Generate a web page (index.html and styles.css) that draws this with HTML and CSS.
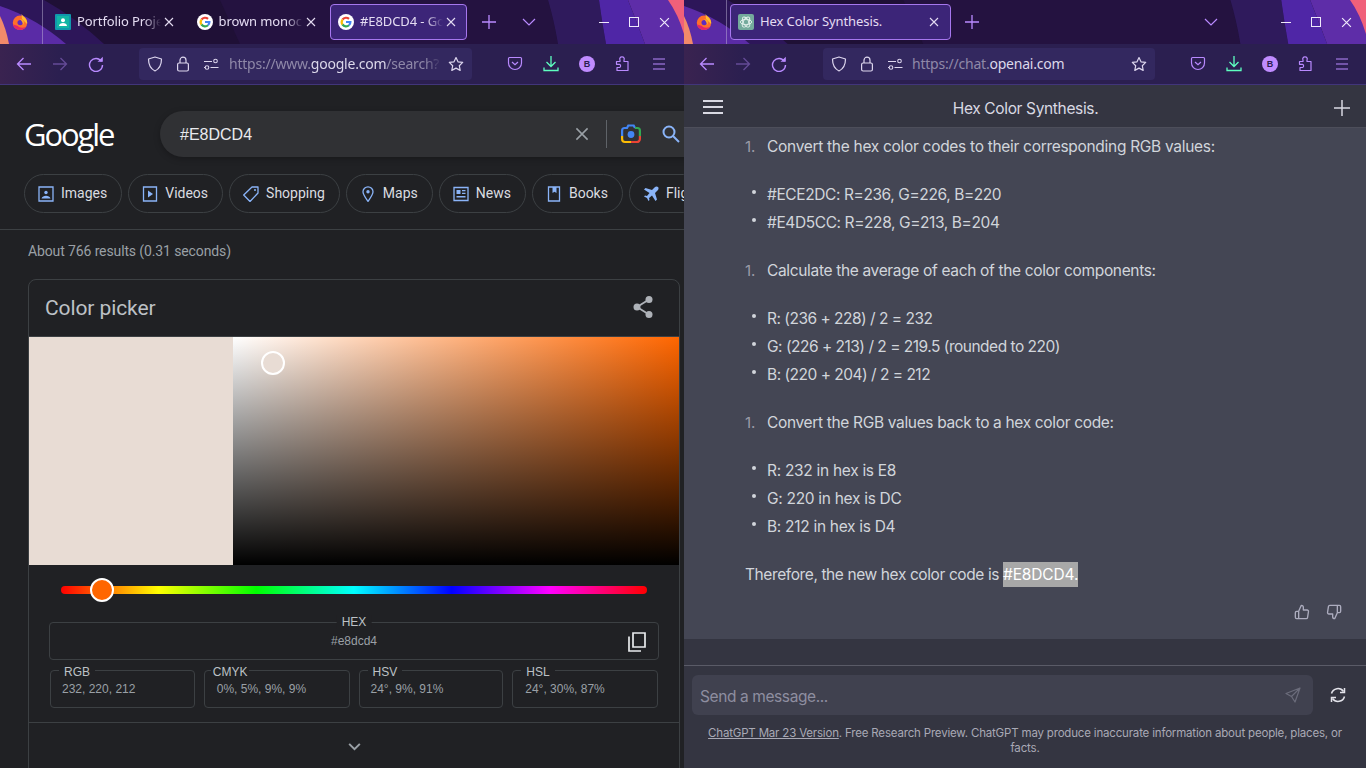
FILE: index.html
```html
<!DOCTYPE html>
<html lang="en">
<head>
<meta charset="utf-8">
<title>Split browsers</title>
<link rel="stylesheet" href="styles.css">
</head>
<body>
<svg class="sprite" width="0" height="0" aria-hidden="true">
  <defs>
    <symbol id="theme" viewBox="0 0 684 44" preserveAspectRatio="none">
      <rect width="684" height="44" fill="#1f1036"/>
      <path d="M220 0H548Q554 20 558 44H240Z" fill="#241240"/>
      <path d="M0 0H44Q76 18 104 44H0Z" fill="#2d1659"/>
      <path d="M0 6Q36 18 66 44H0Z" fill="#5a2ba6"/>
      <path d="M0 16Q6 28 9 44H0Z" fill="#f28a6a"/>
      <path d="M548 0H599Q602 22 606 44H558Q554 20 548 0Z" fill="#2f1a5c"/>
      <path d="M599 0H628Q636 20 645 44H606Q602 22 599 0Z" fill="#4f26a6"/>
      <path d="M628 0H684V44H645Q636 20 628 0Z" fill="#5e2da8"/>
      <path d="M668 0H684V34Q678 14 668 0Z" fill="#f0607a"/>
    </symbol>
    <symbol id="firefox" viewBox="0 0 16 16">
      <circle cx="8" cy="8.800" r="7.200" fill="#ff6f2a"/>
      <path d="M9.500 0c.7 2 3.500 3 4.800 5.500.8 1.500 1 3 .8 4.500L10 5z" fill="#ffbd2e"/>
      <path d="M1 10.500C1.800 13.700 4.600 16 8 16c2.500 0 4.700-1.300 6-3.200-2.700 1.500-6.500 1.300-8.500-1z" fill="#e3246b"/>
      <circle cx="8.200" cy="8.600" r="2.700" fill="#5f2bbf"/>
      <path d="M8 5.200c2.400-.4 4 1.200 4 3.400 0 1-.5 2-1.200 2.600.4-1.800-.5-3.800-2.800-6z" fill="#ffa52b"/>
    </symbol>
    <symbol id="classroom" viewBox="0 0 16 16">
      <rect width="16" height="16" rx="1" fill="#1098ad"/>
      <rect x="2" y="2" width="12" height="12" fill="#12b5a5"/>
      <circle cx="8" cy="6.300" r="2" fill="#fff"/>
      <path d="M4 12c0-2 2-3 4-3s4 1 4 3z" fill="#fff"/>
    </symbol>
    <symbol id="g" viewBox="0 0 16 16">
      <circle cx="8" cy="8" r="8" fill="#fff"/>
      <g fill="none" stroke-width="2.200">
        <path d="M4.500 5.500A4.400 4.400 0 0 1 11 4.900" stroke="#ea4335"/>
        <path d="M4.500 10.500a4.400 4.400 0 0 1 0-5" stroke="#fbbc05"/>
        <path d="M11 11.200A4.400 4.400 0 0 1 4.500 10.500" stroke="#34a853"/>
        <path d="M8 8h4.400a4.400 4.400 0 0 1-1.400 3.200" stroke="#4285f4"/>
      </g>
    </symbol>
    <symbol id="gpt" viewBox="0 0 16 16">
      <rect width="16" height="16" rx="2" fill="#74aa9c"/>
      <g fill="none" stroke="#e6f2ee" stroke-width=".9">
        <ellipse cx="8" cy="8" rx="5.600" ry="2.700"/>
        <ellipse cx="8" cy="8" rx="5.600" ry="2.700" transform="rotate(60 8 8)"/>
        <ellipse cx="8" cy="8" rx="5.600" ry="2.700" transform="rotate(120 8 8)"/>
      </g>
    </symbol>
    <symbol id="back" viewBox="0 0 16 16"><path d="M15 8H1.500M7.500 2L1.500 8l6 6" fill="none" stroke="currentColor" stroke-width="1.300"/></symbol>
    <symbol id="fwd" viewBox="0 0 16 16"><path d="M1 8h13.500M8.500 2l6 6-6 6" fill="none" stroke="currentColor" stroke-width="1.300"/></symbol>
    <symbol id="reload" viewBox="0 0 16 16"><path d="M13.500 5.500A6.500 6.500 0 1 0 14.500 9" fill="none" stroke="currentColor" stroke-width="1.400"/><path d="M9.500 5.800h5.300V.7z" fill="currentColor"/></symbol>
    <symbol id="shield" viewBox="0 0 16 16"><path d="M8 1L14.500 3c0 6-1.500 9.500-6.500 12C3 12.500 1.500 9 1.500 3z" fill="none" stroke="currentColor" stroke-width="1.200" stroke-linejoin="round"/></symbol>
    <symbol id="lock" viewBox="0 0 16 16"><rect x="2.600" y="7" width="10.800" height="8" rx="1.500" fill="none" stroke="currentColor" stroke-width="1.200"/><path d="M5 7V4.200a3 3 0 0 1 6 0V7" fill="none" stroke="currentColor" stroke-width="1.200"/></symbol>
    <symbol id="tune" viewBox="0 0 16 16" fill="none" stroke="currentColor" stroke-width="1.100"><path d="M1 5.500h8M1 11.500h1M7.500 11.500h8"/><circle cx="12.500" cy="5" r="1.800"/><circle cx="4" cy="11.500" r="1.800"/></symbol>
    <symbol id="star" viewBox="0 0 16 16"><path d="M8 1.500l2 4.300 4.700.6-3.400 3.300.9 4.700L8 12.100l-4.200 2.300.9-4.700L1.300 6.400 6 5.800z" fill="none" stroke="currentColor" stroke-width="1.200" stroke-linejoin="round"/></symbol>
    <symbol id="pocket" viewBox="0 0 16 16"><path d="M2.500 1.500h11c.6 0 1 .4 1 1v4.500a6.500 6.500 0 0 1-13 0V2.500c0-.6.4-1 1-1z" fill="none" stroke="currentColor" stroke-width="1.200"/><path d="M5 6l3 2.800L11 6" fill="none" stroke="currentColor" stroke-width="1.200"/></symbol>
    <symbol id="download" viewBox="0 0 16 16"><path d="M8 0v10M3.500 6L8 10.500 12.500 6M1 11.500V14.500h14v-3" fill="none" stroke="currentColor" stroke-width="1.300"/></symbol>
    <symbol id="puzzle" viewBox="0 0 16 16"><path d="M1.500 5.500h3.500V4a2 2 0 0 1 2-3 2 2 0 0 1 2 3v1.500h4v9H2v-3h2.500a1.700 1.700 0 0 0 0-3.200H1.500z" fill="none" stroke="currentColor" stroke-width="1.200" stroke-linejoin="round"/></symbol>
    <symbol id="menu" viewBox="0 0 16 16"><path d="M2 3h12M2 8h12M2 13h12" stroke="currentColor" stroke-width="1.200"/></symbol>
    <symbol id="ham" viewBox="0 0 20 16"><path d="M0 2h20M0 8h20M0 14h20" stroke="currentColor" stroke-width="1.800"/></symbol>
    <symbol id="x" viewBox="0 0 10 10"><path d="M1 1l8 8M9 1L1 9" stroke="currentColor" stroke-width="1.100"/></symbol>
    <symbol id="plus" viewBox="0 0 14 14"><path d="M7 0v14M0 7h14" stroke="currentColor" stroke-width="1.300"/></symbol>
    <symbol id="chev" viewBox="0 0 14 8"><path d="M1 1l6 6 6-6" fill="none" stroke="currentColor" stroke-width="1.200"/></symbol>
    <symbol id="chev-bold" viewBox="0 0 14 9"><path d="M1 1l6 6 6-6" fill="none" stroke="currentColor" stroke-width="2.200"/></symbol>
    <symbol id="images" viewBox="0 0 16 16"><path d="M1 1h14v14H1z" fill="none" stroke="currentColor" stroke-width="1.300"/><circle cx="8" cy="6.500" r="1.700" fill="currentColor"/><path d="M3.500 12.500c.5-2 2.500-2.800 4.500-2.800s4 .8 4.500 2.800z" fill="currentColor"/></symbol>
    <symbol id="video" viewBox="0 0 16 16"><path d="M1.500 1h13v14h-13z" fill="none" stroke="currentColor" stroke-width="1.300"/><path d="M6 4.500L11 8l-5 3.500z" fill="currentColor"/></symbol>
    <symbol id="tag" viewBox="0 0 16 16"><path d="M9 1h6v6l-8 8.500L.7 9z" fill="none" stroke="currentColor" stroke-width="1.300" stroke-linejoin="round"/><circle cx="12" cy="4" r="1" fill="currentColor"/></symbol>
    <symbol id="pin" viewBox="0 0 16 16"><path d="M8 15.500C5 11 3 8.500 3 5.800a5 5 0 0 1 10 0C13 8.500 11 11 8 15.500z" fill="none" stroke="currentColor" stroke-width="1.300"/><circle cx="8" cy="5.800" r="1.700" fill="currentColor"/></symbol>
    <symbol id="news" viewBox="0 0 16 16"><path d="M1 1.500h14v13H1z" fill="none" stroke="currentColor" stroke-width="1.300"/><path d="M3.500 4h4v4h-4zM9 4h3.500v1.300H9zM9 6.700h3.500V8H9zM3.500 10h9v1.500h-9z" fill="currentColor"/></symbol>
    <symbol id="book" viewBox="0 0 16 16"><path d="M2.500 1h11v14h-11z" fill="none" stroke="currentColor" stroke-width="1.300"/><path d="M6.500 1h4v6l-2-1.300-2 1.300z" fill="currentColor"/></symbol>
    <symbol id="plane" viewBox="0 0 16 16"><path d="M15 1c-1-1-2.500-.5-3.500.5L9 4 2.500 2 1 3.500 6.500 7 4 10l-2-.5L1 10.500l3 1.500 1.500 3 1-1L6 12l3-2.500L12.500 15l1.500-1.500L12 7l2.500-2.500c1-1 1.500-2.500.5-3.500z" fill="currentColor"/></symbol>
    <symbol id="share" viewBox="0 0 20 22"><g fill="currentColor"><circle cx="16" cy="3.500" r="3.500"/><circle cx="4" cy="11" r="3.500"/><circle cx="16" cy="18.500" r="3.500"/></g><path d="M16 3.500L4 11l12 7.500" fill="none" stroke="currentColor" stroke-width="1.800"/></symbol>
    <symbol id="copy" viewBox="0 0 18 20"><path d="M5 1h12v14H5z" fill="none" stroke="currentColor" stroke-width="1.700"/><path d="M1 4.500V19h12" fill="none" stroke="currentColor" stroke-width="1.700"/></symbol>
    <symbol id="lens" viewBox="0 0 20 20" fill="none" stroke-width="2.200">
      <path d="M1.100 12V6.500A2.500 2.500 0 0 1 3.600 4H6l1.300-2.500h5.400L14 4" stroke="#4285f4"/>
      <path d="M14 4h2.400a2.500 2.500 0 0 1 2.500 2.500V12" stroke="#34a853"/>
      <path d="M18.900 12v3a3 3 0 0 1-3 3H10" stroke="#ea4335"/>
      <path d="M10 18H4a3 3 0 0 1-2.900-3v-3" stroke="#fbbc05"/>
      <circle cx="10" cy="10.500" r="3.400" fill="#4285f4" stroke="none"/>
    </symbol>
    <symbol id="search" viewBox="0 0 18 18"><circle cx="7" cy="7" r="5.500" fill="none" stroke="currentColor" stroke-width="2"/><path d="M11 11l6 6" stroke="currentColor" stroke-width="2"/></symbol>
    <symbol id="up" viewBox="0 0 24 24"><path d="M14 9V5a3 3 0 0 0-3-3l-4 9v11h11.300a2 2 0 0 0 2-1.700l1.400-9A2 2 0 0 0 19.700 9zM7 22H4a2 2 0 0 1-2-2v-7a2 2 0 0 1 2-2h3" fill="none" stroke="currentColor" stroke-width="2" stroke-linejoin="round"/></symbol>
    <symbol id="down" viewBox="0 0 24 24"><path d="M10 15v4a3 3 0 0 0 3 3l4-9V2H5.700a2 2 0 0 0-2 1.700l-1.400 9A2 2 0 0 0 4.300 15zM17 2h3a2 2 0 0 1 2 2v7a2 2 0 0 1-2 2h-3" fill="none" stroke="currentColor" stroke-width="2" stroke-linejoin="round"/></symbol>
    <symbol id="send" viewBox="0 0 16 16"><path d="M15 1L1 6.500 6.500 9.500 10 15zM15 1L6.500 9.500" fill="none" stroke="currentColor" stroke-width="1.200" stroke-linejoin="round"/></symbol>
    <symbol id="regen" viewBox="0 0 16 16" fill="none" stroke="currentColor" stroke-width="1.500"><path d="M1.500 6.500A6.700 6.700 0 0 1 13.500 4.500"/><path d="M14.500 9.500A6.700 6.700 0 0 1 2.500 11.500"/><path d="M14.500 1v4.500H10M1.500 15v-4.500H6"/></symbol>
  </defs>
</svg>

<main class="desktop">
  <section class="window window-left">
    <header class="tabbar">
      <svg class="theme"><use href="#theme"/></svg>
      <div class="ffbtn"><svg class="i16"><use href="#firefox"/></svg></div>
      <div class="tabs">
        <div class="tab"><svg class="i16"><use href="#classroom"/></svg><span class="tab-label fade">Portfolio Proje</span><svg class="i-x"><use href="#x"/></svg></div>
        <div class="tab"><svg class="i16"><use href="#g"/></svg><span class="tab-label fade">brown monoc</span><svg class="i-x"><use href="#x"/></svg></div>
        <div class="tab tab-active"><svg class="i16"><use href="#g"/></svg><span class="tab-label fade">#E8DCD4 - Goo</span><svg class="i-x"><use href="#x"/></svg></div>
      </div>
      <div class="tool"><svg class="i-plus"><use href="#plus"/></svg></div>
      <div class="tool tool-list"><svg class="i-chev"><use href="#chev"/></svg></div>
      <div class="winctl">
        <span class="ctl"><i class="min"></i></span>
        <span class="ctl"><i class="max"></i></span>
        <span class="ctl"><svg class="i-close"><use href="#x"/></svg></span>
      </div>
    </header>
    <nav class="navbar">
      <div class="nb"><svg class="i16"><use href="#back"/></svg></div>
      <div class="nb off"><svg class="i16"><use href="#fwd"/></svg></div>
      <div class="nb"><svg class="i16"><use href="#reload"/></svg></div>
      <div class="urlbar">
        <svg class="i16 ui"><use href="#shield"/></svg>
        <svg class="i16 ui"><use href="#lock"/></svg>
        <svg class="i16 ui"><use href="#tune"/></svg>
        <span class="url fade-url"><span class="dim">https://www.</span>google.com<span class="dim">/search?</span></span>
        <svg class="i16 ui star"><use href="#star"/></svg>
      </div>
      <div class="nb"><svg class="i16"><use href="#pocket"/></svg></div>
      <div class="nb dl"><svg class="i16"><use href="#download"/></svg></div>
      <div class="nb"><span class="avatar">B</span></div>
      <div class="nb"><svg class="i16"><use href="#puzzle"/></svg></div>
      <div class="nb"><svg class="i16"><use href="#menu"/></svg></div>
    </nav>

    <div class="serp">
      <div class="g-head">
        <div class="g-logo">Google</div>
        <div class="g-search">
          <span class="g-query">#E8DCD4</span>
          <svg class="g-x"><use href="#x"/></svg>
          <span class="g-div"></span>
          <svg class="g-lens"><use href="#lens"/></svg>
          <svg class="g-mag"><use href="#search"/></svg>
        </div>
      </div>
      <div class="chips">
        <span class="chip"><svg class="i16"><use href="#images"/></svg>Images</span>
        <span class="chip"><svg class="i16"><use href="#video"/></svg>Videos</span>
        <span class="chip"><svg class="i16"><use href="#tag"/></svg>Shopping</span>
        <span class="chip"><svg class="i16"><use href="#pin"/></svg>Maps</span>
        <span class="chip"><svg class="i16"><use href="#news"/></svg>News</span>
        <span class="chip"><svg class="i16"><use href="#book"/></svg>Books</span>
        <span class="chip"><svg class="i16"><use href="#plane"/></svg>Flig</span>
      </div>
      <div class="stats">About 766 results (0.31 seconds)</div>
      <article class="card">
        <div class="card-head">
          <h2>Color picker</h2>
          <svg class="i-share"><use href="#share"/></svg>
        </div>
        <div class="picker">
          <div class="swatch"></div>
          <div class="field"><span class="field-dot"></span></div>
        </div>
        <div class="hue"><span class="hue-thumb"></span></div>
        <div class="hexbox">
          <span class="flabel flabel-hex">HEX</span>
          <span class="hexval">#e8dcd4</span>
          <svg class="i-copy"><use href="#copy"/></svg>
        </div>
        <div class="codes">
          <div class="code code-rgb"><span class="flabel">RGB</span>232, 220, 212</div>
          <div class="code code-cmyk"><span class="flabel">CMYK</span>0%, 5%, 9%, 9%</div>
          <div class="code code-hsv"><span class="flabel">HSV</span>24°, 9%, 91%</div>
          <div class="code code-hsl"><span class="flabel">HSL</span>24°, 30%, 87%</div>
        </div>
        <div class="expand"><svg class="i-more"><use href="#chev-bold"/></svg></div>
      </article>
    </div>
  </section>

  <section class="window window-right">
    <header class="tabbar">
      <svg class="theme"><use href="#theme"/></svg>
      <div class="ffbtn"><svg class="i16"><use href="#firefox"/></svg></div>
      <div class="tabs">
        <div class="tab tab-active tab-wide"><svg class="i16"><use href="#gpt"/></svg><span class="tab-label">Hex Color Synthesis.</span><svg class="i-x"><use href="#x"/></svg></div>
      </div>
      <div class="tool"><svg class="i-plus"><use href="#plus"/></svg></div>
      <div class="tool tool-list"><svg class="i-chev"><use href="#chev"/></svg></div>
      <div class="winctl">
        <span class="ctl"><i class="min"></i></span>
        <span class="ctl"><i class="max"></i></span>
        <span class="ctl"><svg class="i-close"><use href="#x"/></svg></span>
      </div>
    </header>
    <nav class="navbar">
      <div class="nb"><svg class="i16"><use href="#back"/></svg></div>
      <div class="nb off"><svg class="i16"><use href="#fwd"/></svg></div>
      <div class="nb"><svg class="i16"><use href="#reload"/></svg></div>
      <div class="urlbar">
        <svg class="i16 ui"><use href="#shield"/></svg>
        <svg class="i16 ui"><use href="#lock"/></svg>
        <svg class="i16 ui"><use href="#tune"/></svg>
        <span class="url"><span class="dim">https://chat.</span>openai.com</span>
        <svg class="i16 ui star"><use href="#star"/></svg>
      </div>
      <div class="nb"><svg class="i16"><use href="#pocket"/></svg></div>
      <div class="nb dl"><svg class="i16"><use href="#download"/></svg></div>
      <div class="nb"><span class="avatar">B</span></div>
      <div class="nb"><svg class="i16"><use href="#puzzle"/></svg></div>
      <div class="nb"><svg class="i16"><use href="#menu"/></svg></div>
    </nav>

    <div class="chat">
      <div class="chat-head">
        <svg class="i-ham"><use href="#ham"/></svg>
        <span class="chat-title">Hex Color Synthesis.</span>
        <svg class="i-new"><use href="#plus"/></svg>
      </div>
      <div class="answer">
        <ol class="step step-first"><li>Convert the hex color codes to their corresponding RGB values:</li></ol>
        <ul class="points points-hex">
          <li>#ECE2DC: R=236, G=226, B=220</li>
          <li>#E4D5CC: R=228, G=213, B=204</li>
        </ul>
        <ol class="step"><li>Calculate the average of each of the color components:</li></ol>
        <ul class="points points-calc">
          <li>R: (236 + 228) / 2 = 232</li>
          <li>G: (226 + 213) / 2 = 219.5 (rounded to 220)</li>
          <li>B: (220 + 204) / 2 = 212</li>
        </ul>
        <ol class="step"><li>Convert the RGB values back to a hex color code:</li></ol>
        <ul class="points">
          <li>R: 232 in hex is E8</li>
          <li>G: 220 in hex is DC</li>
          <li>B: 212 in hex is D4</li>
        </ul>
        <p class="result">Therefore, the new hex color code is <mark>#E8DCD4.</mark></p>
        <div class="votes">
          <svg class="i-vote"><use href="#up"/></svg>
          <svg class="i-vote"><use href="#down"/></svg>
        </div>
      </div>
      <div class="chat-gap"></div>
      <div class="composer">
        <div class="inputrow">
          <div class="input"><span>Send a message...</span><svg class="i-send"><use href="#send"/></svg></div>
          <svg class="i-regen"><use href="#regen"/></svg>
        </div>
        <p class="disclaimer"><u>ChatGPT Mar 23 Version</u>. Free Research Preview. ChatGPT may produce inaccurate information about people, places, or facts.</p>
      </div>
    </div>
  </section>
</main>
</body>
</html>
```

FILE: styles.css
```css
* { box-sizing: border-box; }
html, body { margin: 0; height: 768px; overflow: hidden; background: #202124; }
.sprite { display: block; height: 0; }
svg { display: block; flex: none; }
.desktop { display: flex; width: 1366px; height: 768px; }
.window { display: flex; flex-direction: column; height: 768px; overflow: hidden; }
.window-left { width: 684px; }
.window-right { width: 682px; }

/* browser chrome */
.tabbar { position: relative; display: flex; align-items: center; height: 44px; flex: none; padding-right: 5px; font: 13px "Noto Sans", sans-serif; }
.theme { position: absolute; inset: 0; width: 100%; height: 44px; }
.tabbar > * { z-index: 1; }
.tabbar > .theme { z-index: 0; }
.ffbtn { display: flex; align-items: center; justify-content: center; width: 43px; height: 44px; border-right: 1px solid rgba(200, 190, 220, .45); padding-right: 2px; }
.tabs { display: flex; gap: 2.500px; padding-left: 4px; }
.window-right .tabs { padding-left: 3px; margin-right: -1px; }
.tab { display: flex; align-items: center; width: 139px; height: 35px; padding: 0 12px 0 8px; color: #e4dcf2; }
.tab-active { height: 36px; width: 137px; border: 1px solid #a677ee; border-radius: 4px; background: #3c2578; padding: 0 10px 0 7px; }
.tab-wide { width: 221px; padding-right: 11px; }
.tab-label { flex: 1; min-width: 0; margin-left: 6px; padding-bottom: 2px; white-space: nowrap; letter-spacing: -.1px; }
.fade { -webkit-mask-image: linear-gradient(to right, #000 80%, transparent 100%); mask-image: linear-gradient(to right, #000 80%, transparent 100%); }
.i-x { width: 10px; height: 10px; margin-left: 3px; color: #e4dcf2; }
.tool { display: flex; align-items: center; justify-content: center; width: 36px; height: 36px; color: #b98aff; }
.tabs + .tool { margin-left: 4px; }
.tool-list { margin: 0 42px 0 auto; }
.i-plus { width: 14px; height: 14px; }
.i-chev { width: 14px; height: 8px; }
.winctl { display: flex; }
.ctl { display: flex; align-items: center; justify-content: center; width: 30px; height: 30px; color: #efe9fb; }
.min { width: 10px; height: 1px; background: #efe9fb; }
.max { width: 10px; height: 10px; border: 1px solid #efe9fb; }
.i-close { width: 11px; height: 11px; }

.navbar { display: flex; align-items: center; height: 41px; flex: none; padding: 0 7px 1px 6px; background: linear-gradient(to right, #3a2350 0, #2b1f50 60px); border-bottom: 1px solid #41357a; color: #b98aff; }
.window-right .navbar { padding-left: 5px; padding-right: 6px; }
.nb { display: flex; align-items: center; justify-content: center; width: 36px; height: 32px; flex: none; }
.off { opacity: .4; }
.dl { color: #5effc0; }
.urlbar { display: flex; align-items: center; flex: 1; min-width: 0; height: 32px; margin: 0 25px; padding: 0 8px; background: #33285f; border-radius: 4px; }
.window-right .urlbar { margin-left: 26px; }
.ui { margin-right: 12px; color: #ddd6ee; }
.url { flex: 1; min-width: 0; white-space: nowrap; margin-left: -2px; font: 14px "Noto Sans", sans-serif; color: #dcd8ea; letter-spacing: -.22px; }
.window-right .url { margin-left: -3px; }
.dim { color: #8f88a8; }
.fade-url { -webkit-mask-image: linear-gradient(to right, #000 92%, transparent 100%); mask-image: linear-gradient(to right, #000 92%, transparent 100%); }
.star { margin: 0 0 0 6px; }
.i16 { width: 16px; height: 16px; }
.avatar { display: flex; align-items: center; justify-content: center; width: 16px; height: 16px; border-radius: 50%; background: #c08cff; color: #2b1f50; font: bold 9px "Liberation Sans", sans-serif; }

/* Google results */
.serp { flex: 1; min-height: 0; background: #202124; color: #bdc1c6; font-family: Roboto, sans-serif; }
.g-head { display: flex; align-items: center; height: 46px; margin-top: 26px; padding-left: 24px; }
.g-logo { width: 136px; flex: none; font: 500 31px/46px "Open Sans", sans-serif; letter-spacing: -2.100px; color: #fff; }
.g-search { display: flex; align-items: center; flex: none; width: 600px; height: 46px; padding-left: 20px; border-radius: 23px; background: #303134; box-shadow: 0 2px 6px rgba(0, 0, 0, .25); }
.g-query { width: 394px; padding-top: 1px; font: 16px "Liberation Sans", sans-serif; color: #e8eaed; }
.g-x { width: 14px; height: 14px; margin-left: 1px; color: #9aa0a6; }
.g-div { width: 1px; height: 28px; margin: 0 14px 0 17px; background: #5f6368; }
.g-lens { width: 20px; height: 20px; }
.g-mag { width: 18px; height: 18px; margin-left: 21px; color: #8ab4f8; }
.chips { display: flex; gap: 6px; padding: 17px 0 16px 24px; border-bottom: 1px solid #3c4043; overflow: hidden; }
.chip { display: flex; align-items: center; gap: 7px; flex: none; height: 39px; padding: 0 14px 2px 13px; border: 1px solid #3c4043; border-radius: 20px; font: 14px Roboto, sans-serif; color: #dadce0; }
.chip svg { color: #8ab4f8; margin-top: 2px; }
.stats { padding: 12px 0 0 28px; height: 49px; font: 14px/18px Roboto, sans-serif; letter-spacing: -.12px; color: #9aa0a6; }
.card { width: 652px; margin-left: 28px; border: 1px solid #3c4043; border-radius: 8px 8px 0 0; height: 520px; }
.card-head { display: flex; align-items: center; justify-content: space-between; height: 57px; padding: 0 26px 2px 16px; border-bottom: 1px solid #3c4043; }
.card-head h2 { margin: 2px 0 0; font: 400 21px Roboto, sans-serif; letter-spacing: -.1px; color: #bdc1c6; }
.i-share { width: 20px; height: 22px; color: #aeb2b8; }
.picker { display: flex; height: 228px; }
.swatch { width: 204px; background: #e8dcd4; }
.field { position: relative; flex: 1; background: linear-gradient(to top, #000, transparent), linear-gradient(to right, #fff, #ff6600); }
.field-dot { position: absolute; left: 28px; top: 14px; width: 24px; height: 24px; border: 2px solid #fff; border-radius: 50%; background: #e8dcd4; }
.hue { position: relative; height: 8px; margin: 21px 32px 0; border-radius: 4px; background: linear-gradient(to right, #f00 0, #ff0 16.67%, #0f0 33.33%, #0ff 50%, #00f 66.67%, #f0f 83.33%, #f00 100%); }
.hue-thumb { position: absolute; left: 29px; top: -8px; width: 24px; height: 24px; border: 2px solid #fff; border-radius: 50%; background: #ff6600; }
.hexbox { position: relative; display: flex; align-items: center; justify-content: center; height: 38px; margin: 28px 20px 0; border: 1px solid #3c4043; border-radius: 4px; font: 12px "Liberation Sans", sans-serif; }
.hexval { color: #9aa0a6; }
.flabel { position: absolute; top: -7px; left: 8px; padding: 0 5px; background: #202124; font: 12px/14px "Liberation Sans", sans-serif; color: #bdc1c6; }
.flabel-hex { left: 50%; top: -8px; transform: translateX(-50%); }
.i-copy { position: absolute; right: 12px; top: 9px; width: 18px; height: 20px; color: #e8eaed; }
.codes { display: flex; gap: 9px; margin: 10px 21px 0; }
.code { position: relative; flex: 1; height: 38px; padding: 11px 0 0 11px; border: 1px solid #3c4043; border-radius: 4px; font: 12px/14px "Liberation Sans", sans-serif; color: #9aa0a6; }
.code .flabel { top: -6px; }
.code-cmyk { padding-left: 12px; }
.code-hsl { padding-left: 12px; }
.code-cmyk .flabel { left: 6px; padding: 0 2px; }
.i-more { width: 13px; height: 8px; color: #9aa0a6; }
.expand { display: flex; align-items: center; justify-content: center; height: 49px; margin-top: 14px; border-top: 1px solid #3c4043; }

/* ChatGPT */
.chat { display: flex; flex-direction: column; flex: 1; min-height: 0; background: #343541; font-family: Inter, sans-serif; }
.chat-head { display: flex; align-items: center; justify-content: space-between; height: 43px; flex: none; padding: 0 16px 0 19px; border-bottom: 1px solid #4d4e5a; }
.i-ham { width: 20px; height: 16px; margin-top: 1px; color: #d9d9e3; }
.i-new { width: 16px; height: 16px; margin-top: 3px; color: #d9d9e3; }
.chat-title { font: 15.500px Inter, sans-serif; letter-spacing: -.35px; color: #d9d9e3; padding-right: 6px; margin-top: 4px; }
.answer { flex: none; height: 511px; background: #444654; padding: 5px 0 0 61px; color: #d1d5db; font-size: 15.500px; line-height: 28px; letter-spacing: -.3px; }
.step, .points { list-style: none; margin: 0 0 20px; padding: 0; }
.step { letter-spacing: -.34px; }
.step-first { letter-spacing: -.3px; }
.points-hex { letter-spacing: -.4px; }
.points-calc { letter-spacing: -.5px; }
.step li, .points li { display: flex; }
.step li::before { content: "1."; width: 22px; color: #9b9ca8; font-size: 15px; letter-spacing: 0; }
.points li::before { content: ""; width: 4px; height: 4px; margin: 9px 11px 0 7px; border-radius: 50%; background: #d1d5db; }
.result { margin: 0; letter-spacing: -.4px; }
.result mark { background: #a8a8a8; color: #fff; padding: 3px 0; letter-spacing: -.15px; }
.votes { display: flex; justify-content: flex-end; gap: 16px; margin: 15px 24px 0 0; }
.i-vote { width: 16px; height: 16px; color: #acacbe; }
.chat-gap { height: 26px; flex: none; }
.composer { flex: 1; border-top: 1px solid #5a5b67; padding: 9px 8px 0; }
.inputrow { display: flex; align-items: center; }
.input { display: flex; align-items: center; justify-content: space-between; width: 621px; height: 40px; padding: 2px 12px 0 8px; border-radius: 6px; background: #40414f; color: #8e8ea0; font-size: 15.500px; letter-spacing: -.4px; }
.i-send { width: 16px; height: 16px; margin-top: -2px; color: #6b6c7b; }
.i-regen { width: 16px; height: 16px; margin-left: 17px; color: #e3e3ea; }
.disclaimer { margin: 11px 0 0; padding: 0 8px; text-align: center; font-size: 11.500px; line-height: 15px; letter-spacing: -.18px; color: #a9a9b5; }
```
